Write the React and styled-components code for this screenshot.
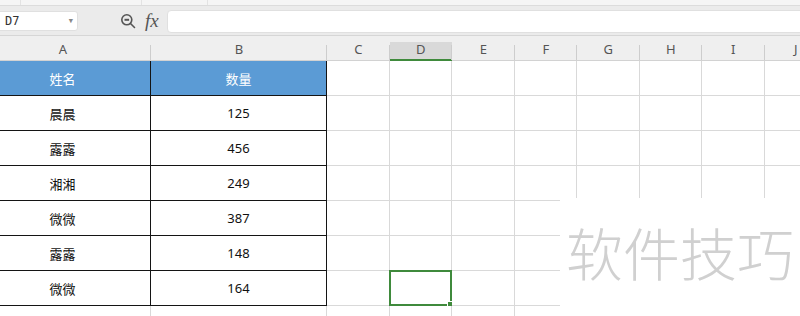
import React from 'react';
import styled, { createGlobalStyle } from 'styled-components';

const GlobalStyle = createGlobalStyle`
  html, body {
    margin: 0;
    padding: 0;
    background: #fff;
  }
  body {
    font-family: "Noto Sans", "Noto Sans CJK SC", sans-serif;
  }
`;

const Page = styled.div`
  position: relative;
  width: 800px;
  height: 316px;
  overflow: hidden;
  background: #fff;
`;

const TopStrip = styled.div`
  height: 5px;
  background: #f5f5f5;
  border-bottom: 1px solid #dcdcdc;
  display: flex;
`;

const StripTab = styled.div`
  width: ${p => p.$w}px;
  border-right: 1px solid #e3e3e3;
`;

const FormulaBar = styled.div`
  height: 30px;
  background: #ebebeb;
  border-bottom: 1px solid #d6d6d6;
  display: flex;
  align-items: center;
  padding-top: 1px;
  box-sizing: border-box;
`;

const NameBox = styled.div`
  width: 82px;
  height: 20px;
  margin-left: -4px;
  background: #fff;
  border-radius: 3px;
  border: 1px solid #e0e0e0;
  box-sizing: border-box;
  display: flex;
  align-items: center;
  justify-content: space-between;
  padding: 0 4px 0 8px;
  font-family: "DejaVu Sans Mono", "Liberation Mono", monospace;
  font-size: 12px;
  color: #333;
`;

const Caret = styled.span`
  font-size: 7px;
  color: #888;
`;

const Tools = styled.div`
  display: flex;
  align-items: center;
  gap: 9px;
  margin-left: 42px;
`;

const Fx = styled.span`
  font-family: "Liberation Serif", serif;
  font-style: italic;
  font-size: 19px;
  color: #555;
  line-height: 1;
  margin-top: -2px;
`;

const FormulaInput = styled.div`
  flex: 1;
  height: 21px;
  margin-left: 8px;
  margin-right: -6px;
  background: #fff;
  border-radius: 4px;
  border: 1px solid #e0e0e0;
`;

const Grid = styled.div`
  display: grid;
  grid-template-columns: 176px 176px repeat(8, 62.5px) 100px;
  margin-left: -25px;
`;

const ColHead = styled.div`
  position: relative;
  height: 25px;
  background: #efefef;
  border-bottom: 1px solid #d2d2d2;
  box-sizing: border-box;
  display: flex;
  align-items: flex-end;
  justify-content: center;
  padding-bottom: 2px;
  font-size: 13px;
  color: #555;

  &::before {
    content: "";
    position: absolute;
    left: 0;
    right: 0;
    top: 6px;
    bottom: -1px;
    background: ${p => (p.$active ? '#d9d9d9' : 'transparent')};
    border-bottom: ${p => (p.$active ? '2px solid #3f8a3c' : 'none')};
  }

  &::after {
    content: "";
    position: absolute;
    right: 0;
    bottom: 0;
    height: 15px;
    border-right: 1px solid #cdcdcd;
  }

  span {
    position: relative;
  }
`;

const Cell = styled.div`
  position: relative;
  height: 35px;
  box-sizing: border-box;
  border-right: 1px solid ${p => (p.$table ? '#141414' : '#d9d9d9')};
  border-bottom: 1px solid ${p => (p.$table ? '#141414' : '#d9d9d9')};
  background: ${p => (p.$head ? '#5b9bd5' : '#fff')};
  color: ${p => (p.$head ? '#fff' : '#111')};
  display: flex;
  align-items: center;
  justify-content: center;
  font-size: 13px;
`;

const Selection = styled.div`
  position: absolute;
  left: -1px;
  top: -1px;
  right: -1px;
  bottom: -1px;
  border: 2px solid #3f8a3c;

  &::after {
    content: "";
    position: absolute;
    right: -4px;
    bottom: -4px;
    width: 5px;
    height: 5px;
    background: #3f8a3c;
    border: 1px solid #fff;
  }
`;

const Watermark = styled.div`
  position: absolute;
  left: 560px;
  top: 198px;
  right: 0;
  bottom: 0;
  background: #fff;
  display: flex;
  align-items: flex-start;
  padding: 22px 0 0 6px;
  font-family: "Noto Sans CJK SC", sans-serif;
  font-weight: 300;
  font-size: 57px;
  letter-spacing: 0px;
  color: #d0d0d0;
  line-height: 1.1;
`;

const columns = ['A', 'B', 'C', 'D', 'E', 'F', 'G', 'H', 'I', 'J', ''];

const rows = [
  ['姓名', '数量'],
  ['晨晨', '125'],
  ['露露', '456'],
  ['湘湘', '249'],
  ['微微', '387'],
  ['露露', '148'],
  ['微微', '164'],
  null,
];

const ZoomIcon = () => (
  <svg width="16" height="16" viewBox="0 0 16 16" fill="none" stroke="#555" strokeWidth="1.6">
    <circle cx="6.8" cy="6.8" r="5" />
    <line x1="10.5" y1="10.5" x2="14.5" y2="14.5" strokeLinecap="round" />
    <line x1="4.5" y1="6.8" x2="9.1" y2="6.8" strokeWidth="2" />
  </svg>
);

export default function App() {
  return (
    <Page>
      <GlobalStyle />
      <TopStrip>
        <StripTab $w={20} />
        <StripTab $w={120} />
        <StripTab $w={65} />
      </TopStrip>
      <FormulaBar>
        <NameBox>
          D7<Caret>▼</Caret>
        </NameBox>
        <Tools>
          <ZoomIcon />
          <Fx>fx</Fx>
        </Tools>
        <FormulaInput />
      </FormulaBar>
      <Grid>
        {columns.map((c, i) => (
          <ColHead key={'h' + i} $active={c === 'D'}>
            <span>{c}</span>
          </ColHead>
        ))}
        {rows.map((r, ri) =>
          columns.map((c, ci) => {
            const inTable = r && ci < 2;
            return (
              <Cell key={ri + '-' + ci} $table={inTable} $head={inTable && ri === 0}>
                {inTable ? r[ci] : ''}
                {ri === 6 && c === 'D' && <Selection />}
              </Cell>
            );
          })
        )}
      </Grid>
      <Watermark>软件技巧</Watermark>
    </Page>
  );
}
